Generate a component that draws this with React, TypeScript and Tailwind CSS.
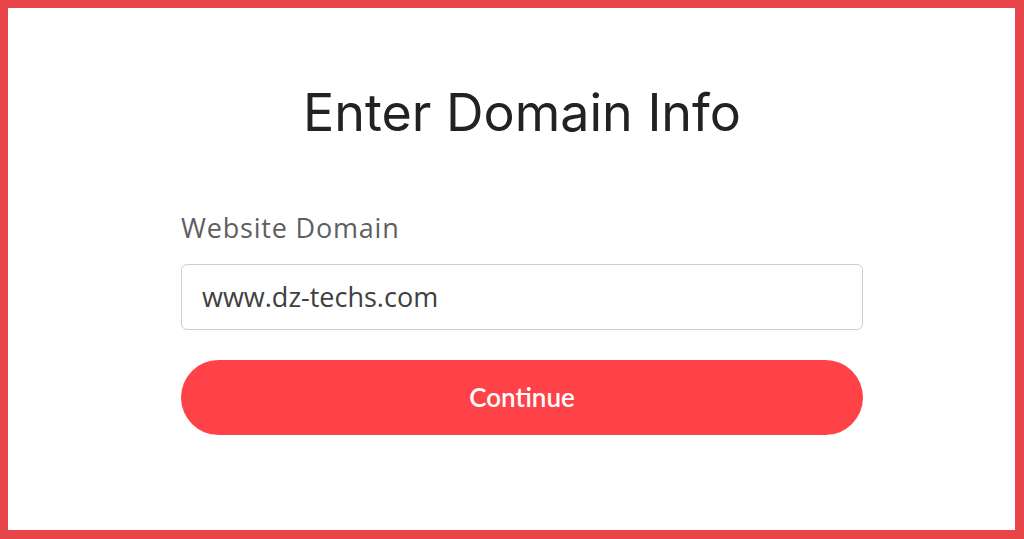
export default function App() {
  return (
    <div className="w-full h-[539px] bg-white border-t-8 border-l-8 border-r-[9px] border-b-[9px] border-[#e8454a] box-border">
      <div className="ml-[173px] w-[682px] flex flex-col">
        <h1 className="mt-[79px] text-center text-[52px] leading-[52px] font-normal text-[#222222] font-['Inter','Liberation_Sans',sans-serif]">
          Enter Domain Info
        </h1>
        <label className="mt-[76px] text-[27px] leading-[26px] tracking-[0.8px] text-[#5e5f61] font-['Open_Sans','Noto_Sans',sans-serif]">
          Website Domain
        </label>
        <div className="mt-[23px] h-[66px] rounded-[6px] border-[1.5px] border-[#cfcfcf] flex items-center pl-[20px] text-[27px] text-[#404040] font-['Open_Sans','Noto_Sans',sans-serif]">
          www.dz-techs.com
        </div>
        <button className="mt-[30px] h-[75px] rounded-[38px] bg-[#ff4148] text-white text-[26px] font-semibold flex items-center justify-center font-['Lato','Noto_Sans',sans-serif]">
          Continue
        </button>
      </div>
    </div>
  );
}
